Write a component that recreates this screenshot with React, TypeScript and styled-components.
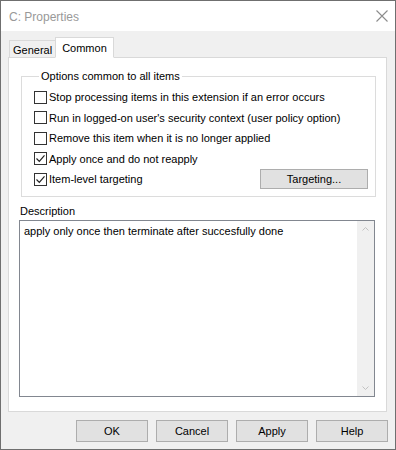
import styled, { createGlobalStyle } from "styled-components";

const GlobalStyle = createGlobalStyle`
  html, body {
    margin: 0;
    padding: 0;
    background: #ffffff;
  }
  body {
    font-family: "Liberation Sans", Arial, sans-serif;
    font-size: 11px;
    color: #000;
  }
`;

const options = [
  { label: "Stop processing items in this extension if an error occurs", checked: false },
  { label: "Run in logged-on user's security context (user policy option)", checked: false },
  { label: "Remove this item when it is no longer applied", checked: false },
  { label: "Apply once and do not reapply", checked: true },
  { label: "Item-level targeting", checked: true },
];

function CheckMark() {
  return (
    <svg width="11" height="11" viewBox="0 0 11 11">
      <path d="M1.5 5.5 L4.3 8.3 L9.5 2.3" fill="none" stroke="#222" strokeWidth="1.2" />
    </svg>
  );
}

function App() {
  return (
    <>
      <GlobalStyle />
      <Window>
        <TitleBar>
          <Title>C: Properties</Title>
          <CloseIcon width="12" height="12" viewBox="0 0 12 12">
            <path d="M0.5 0.5 L11.5 11.5 M11.5 0.5 L0.5 11.5" stroke="#8c8c8c" strokeWidth="1.1" />
          </CloseIcon>
        </TitleBar>
        <Body>
          <TabRow>
            <Tab>General</Tab>
            <Tab $active>Common</Tab>
          </TabRow>
          <Panel>
            <GroupBox>
              <Legend>Options common to all items</Legend>
              {options.map((opt, i) => (
                <OptionRow key={opt.label}>
                  <CheckBox>{opt.checked && <CheckMark />}</CheckBox>
                  <OptionText>{opt.label}</OptionText>
                  {i === options.length - 1 && <TargetButton>Targeting...</TargetButton>}
                </OptionRow>
              ))}
            </GroupBox>
            <DescLabel>Description</DescLabel>
            <TextBox>
              <TextContent>apply only once then terminate after succesfully done</TextContent>
              <ScrollBar>
                <Arrow viewBox="0 0 7 4" width="7" height="4">
                  <path d="M0.5 3.5 L3.5 0.5 L6.5 3.5" fill="none" stroke="#c2c2c2" />
                </Arrow>
                <Arrow viewBox="0 0 7 4" width="7" height="4">
                  <path d="M0.5 0.5 L3.5 3.5 L6.5 0.5" fill="none" stroke="#c2c2c2" />
                </Arrow>
              </ScrollBar>
            </TextBox>
          </Panel>
          <ButtonRow>
            <DialogButton>OK</DialogButton>
            <DialogButton>Cancel</DialogButton>
            <DialogButton>Apply</DialogButton>
            <DialogButton>Help</DialogButton>
          </ButtonRow>
        </Body>
      </Window>
    </>
  );
}

const Window = styled.div`
  width: 396px;
  height: 450px;
  box-sizing: border-box;
  border: 1px solid #6f6f6f;
  display: flex;
  flex-direction: column;
  background: #f0f0f0;
`;

const TitleBar = styled.div`
  height: 30px;
  background: #ffffff;
  display: flex;
  align-items: center;
  justify-content: space-between;
  padding: 0 7px 0 8px;
`;

const Title = styled.div`
  color: #999999;
  font-size: 12px;
  padding-top: 1px;
`;

const CloseIcon = styled.svg`
  display: block;
`;

const Body = styled.div`
  flex: 1;
  padding: 6px 7px 0 7px;
  display: flex;
  flex-direction: column;
`;

const TabRow = styled.div`
  display: flex;
  align-items: flex-end;
  height: 21px;
  padding-left: 1px;
  position: relative;
  z-index: 1;
  margin-bottom: -1px;
`;

const Tab = styled.div<{ $active?: boolean }>`
  box-sizing: border-box;
  height: ${(p) => (p.$active ? "21px" : "18px")};
  padding: 0 ${(p) => (p.$active ? "6px" : "3px")};
  border: 1px solid #d9d9d9;
  border-bottom: ${(p) => (p.$active ? "1px solid #ffffff" : "1px solid #d9d9d9")};
  margin-left: ${(p) => (p.$active ? "-1px" : "0")};
  background: ${(p) => (p.$active ? "#ffffff" : "#f0f0f0")};
  display: flex;
  align-items: center;
  padding-top: ${(p) => (p.$active ? "0" : "2px")};
`;

const Panel = styled.div`
  height: 355px;
  box-sizing: border-box;
  width: 379px;
  background: #ffffff;
  border: 1px solid #d9d9d9;
  padding: 10px 10px 0 12px;
  display: flex;
  flex-direction: column;
`;

const GroupBox = styled.fieldset`
  margin: 0;
  padding: 3px 7px 6px 12px;
  border: 1px solid #dcdcdc;
  display: flex;
  flex-direction: column;
`;

const Legend = styled.legend`
  padding: 0 2px;
  margin-left: 5px;
  line-height: 16px;
`;

const OptionRow = styled.div`
  display: flex;
  align-items: center;
  height: 20.5px;
`;

const CheckBox = styled.div`
  width: 13px;
  height: 13px;
  box-sizing: border-box;
  border: 1px solid #333333;
  background: #ffffff;
  display: flex;
  align-items: center;
  justify-content: center;
  flex-shrink: 0;
`;

const OptionText = styled.span`
  margin-left: 2px;
  white-space: nowrap;
`;

const TargetButton = styled.div`
  margin-left: auto;
  width: 108px;
  height: 20px;
  box-sizing: border-box;
  border: 1px solid #adadad;
  background: #e1e1e1;
  display: flex;
  align-items: center;
  justify-content: center;
`;

const DescLabel = styled.div`
  margin-top: 6px;
  margin-left: -1px;
  line-height: 16px;
`;

const TextBox = styled.div`
  margin-top: 1px;
  margin-left: -2px;
  width: 356px;
  height: 177px;
  box-sizing: border-box;
  border: 1px solid #828790;
  display: flex;
`;

const TextContent = styled.div`
  flex: 1;
  padding: 2px 4px;
  line-height: 16px;
`;

const ScrollBar = styled.div`
  width: 17px;
  background: #f0f0f0;
  display: flex;
  flex-direction: column;
  justify-content: space-between;
  align-items: center;
  padding: 6px 0 6px;
`;

const Arrow = styled.svg`
  display: block;
`;

const ButtonRow = styled.div`
  display: flex;
  justify-content: flex-end;
  gap: 8px;
  margin-top: 8px;
`;

const DialogButton = styled.div`
  width: 72px;
  height: 22px;
  box-sizing: border-box;
  border: 1px solid #adadad;
  background: #e1e1e1;
  display: flex;
  align-items: center;
  justify-content: center;
`;

export default App;
